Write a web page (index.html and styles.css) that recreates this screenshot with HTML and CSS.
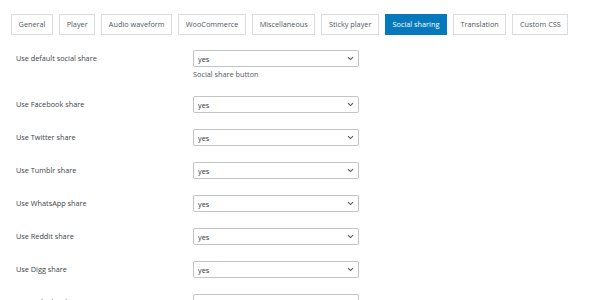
FILE: index.html
```html
<!DOCTYPE html>
<html lang="en">
<head>
  <meta charset="UTF-8" />
  <title>Settings - Social sharing</title>
  <link rel="stylesheet" href="styles.css">
</head>
<body>

  <nav class="tabs">
    <a class="tab">General</a>
    <a class="tab">Player</a>
    <a class="tab">Audio waveform</a>
    <a class="tab">WooCommerce</a>
    <a class="tab">Miscellaneous</a>
    <a class="tab">Sticky player</a>
    <a class="tab active">Social sharing</a>
    <a class="tab">Translation</a>
    <a class="tab">Custom CSS</a>
  </nav>

  <section class="settings" id="rows"></section>

  <script>
    const rows = [
      { label: "Use default social share", desc: "Social share button" },
      { label: "Use Facebook share" },
      { label: "Use Twitter share" },
      { label: "Use Tumblr share" },
      { label: "Use WhatsApp share" },
      { label: "Use Reddit share" },
      { label: "Use Digg share" },
      { label: "Use LinkedIn share" }
    ];

    const chevron = `<svg class="chevron" width="7" height="5" viewBox="0 0 7 5"><path d="M1 1.2 L3.5 3.6 L6 1.2" fill="none" stroke="#555" stroke-width="1.1"/></svg>`;

    const box = document.getElementById('rows');
    rows.forEach(r => {
      box.innerHTML += `<div class="row">
        <label class="label">${r.label}</label>
        <div class="field">
          <div class="select">
            <select><option>yes</option><option>no</option></select>
            ${chevron}
          </div>
          ${r.desc ? `<p class="desc">${r.desc}</p>` : ''}
        </div>
      </div>`;
    });
  </script>
</body>
</html>
```

FILE: styles.css
```css
* { box-sizing: border-box; }
body {
  font-family: 'Open Sans', 'Noto Sans', sans-serif;
  font-size: 7.3px;
  margin: 0;
  background: #fff;
  color: #3c434a;
}

/* Tabs */
.tabs {
  display: flex;
  gap: 6px;
  padding: 14px 0 0 11px;
}
.tab {
  height: 21px;
  line-height: 19px;
  padding: 0 6.6px;
  border: 1px solid #dcdcde;
  color: #50575e;
  background: #fff;
  white-space: nowrap;
}
.tab.active {
  background: #0679bd;
  border-color: #0679bd;
  color: #fff;
}

/* Rows */
.settings {
  padding: 15px 0 0 16px;
}
.row {
  display: flex;
  align-items: flex-start;
  padding-bottom: 16px;
}
.label {
  width: 177px;
  line-height: 17px;
  flex-shrink: 0;
}
.field {
  width: 166px;
}
.select {
  position: relative;
  height: 17px;
}
.select select {
  appearance: none;
  width: 100%;
  height: 17px;
  padding: 0 4px;
  border: 1px solid #c3c4c7;
  border-radius: 2px;
  background: #fff;
  font-family: inherit;
  font-size: 7.3px;
  color: #2c3338;
}
.chevron {
  position: absolute;
  right: 5px;
  top: 6px;
}
.desc {
  margin: 1px 0 0;
  line-height: 12px;
  color: #50575e;
}
```
